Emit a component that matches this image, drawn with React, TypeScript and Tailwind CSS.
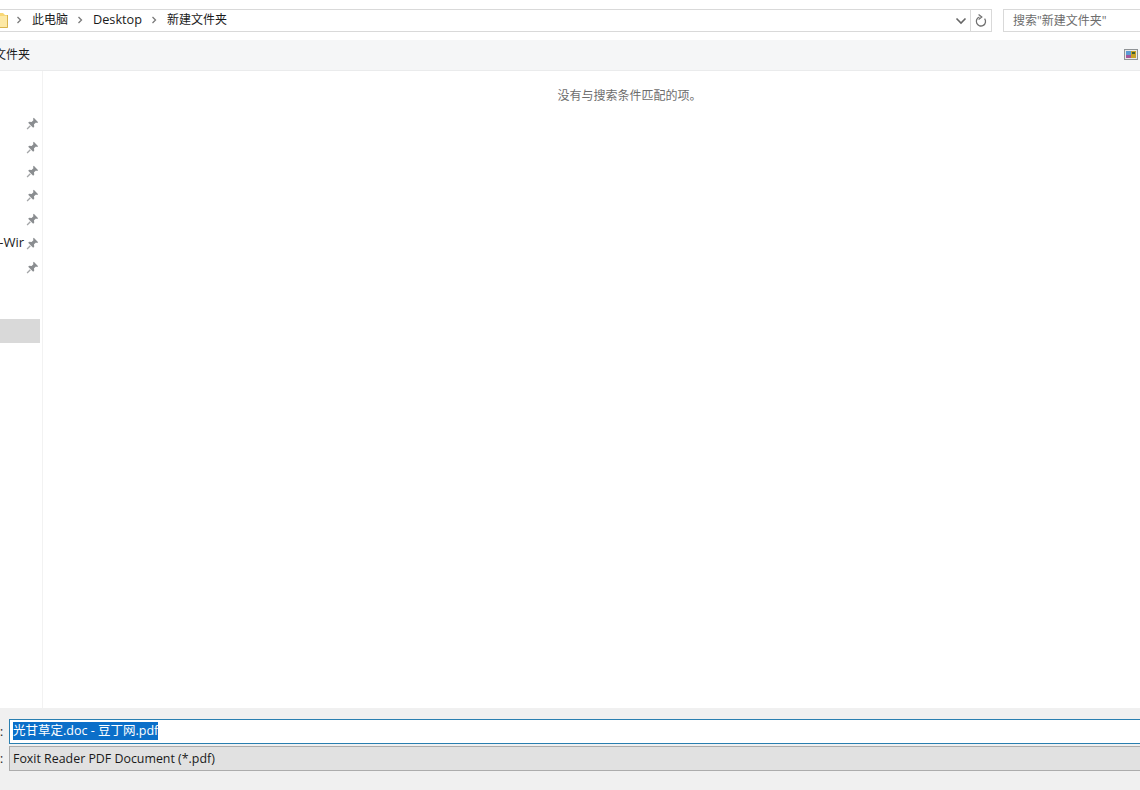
const sans = "font-['Open_Sans','Noto_Sans_CJK_SC',sans-serif]";

function Pin() {
  return (
    <svg width="13" height="13" viewBox="0 0 12 12" className="shrink-0">
      <path d="M7.2 0.8 L11.2 4.8 L10.2 5.6 L9.2 5 L7.4 6.8 L7.6 9 L6.6 10 L2 5.4 L3 4.4 L5.2 4.6 L7 2.8 L6.4 1.8 Z" fill="#8a8d90" />
      <path d="M4 8 L1 11" stroke="#a5a7a9" strokeWidth="1.2" />
    </svg>
  );
}

function SideRow({ label }: { label?: string }) {
  return (
    <div className="flex h-6 items-center justify-end overflow-hidden pr-[1px]">
      {label && <span className="mr-[2px] whitespace-nowrap text-[13px] text-[#1a1a1a]">{label}</span>}
      <Pin />
    </div>
  );
}

function Chevron() {
  return (
    <svg width="6" height="8" viewBox="0 0 6 8" className="shrink-0">
      <path d="M1.5 1 L4.5 4 L1.5 7" fill="none" stroke="#7a7a7a" strokeWidth="1.3" />
    </svg>
  );
}

export default function App() {
  return (
    <div className={`flex h-[790px] w-[1140px] flex-col overflow-hidden bg-white ${sans}`}>
      <div className="flex h-10 shrink-0 items-start bg-white pt-[9px]">
        <div className="flex h-[23px] w-[992px] items-center border-y border-r border-[#d9d9d9]">
          <svg width="8" height="15" viewBox="0 0 8 15" className="shrink-0">
            <path d="M0 0 H3 L5 2 H8 V15 H0 Z" fill="#f8d775" />
            <path d="M0 3 H8 V15 H0 Z" fill="#fde9a6" />
            <path d="M7.5 2 V14.5 H0" fill="none" stroke="#d9b44f" />
          </svg>
          <div className="ml-[8px] mt-[-1px]"><Chevron /></div>
          <span className="ml-[10px] mt-[-2px] text-xs text-[#1a1a1a]">此电脑</span>
          <div className="ml-[9px] mt-[-1px]"><Chevron /></div>
          <span className="ml-[10px] mt-[-2px] text-[12.7px] text-[#1a1a1a]">Desktop</span>
          <div className="ml-[9px] mt-[-1px]"><Chevron /></div>
          <span className="ml-[10px] mt-[-2px] text-xs text-[#1a1a1a]">新建文件夹</span>
          <svg width="12" height="8" viewBox="0 0 12 8" className="ml-auto mr-[3px] shrink-0">
            <path d="M1.5 1.5 L6 6 L10.5 1.5" fill="none" stroke="#666" strokeWidth="1.6" />
          </svg>
          <div className="flex h-full w-[21px] items-center justify-center border-l border-[#d9d9d9]">
            <svg width="12" height="14" viewBox="0 0 12 14" className="mr-[1px]">
              <path d="M9.6 4.6 A4.6 4.6 0 1 1 4.5 3" fill="none" stroke="#707070" strokeWidth="1.3" />
              <path d="M3.6 0.5 L6.8 3 L3.6 5.4" fill="none" stroke="#707070" strokeWidth="1.2" />
            </svg>
          </div>
        </div>
        <div className="ml-[11px] flex h-[23px] flex-1 items-center border-y border-l border-[#d9d9d9] pl-[9px] text-xs text-[#6d6d6d]">
          搜索"新建文件夹"
        </div>
      </div>

      <div className="flex h-[31px] shrink-0 items-center justify-between border-b border-[#eaebec] bg-[#f5f6f7]">
        <span className="ml-[-6px] text-xs text-[#1a1a1a]">文件夹</span>
        <svg width="14" height="11" viewBox="0 0 14 11" className="mr-[2px] mt-[-2px]">
          <rect x="0.5" y="0.5" width="13" height="10" fill="#e8e8e8" stroke="#8f9396" />
          <rect x="2" y="2" width="5" height="4" fill="#5b9bd5" />
          <rect x="2" y="6" width="5" height="3" fill="#a3569b" />
          <rect x="7" y="2" width="5" height="7" fill="#c9a227" />
          <rect x="8" y="3" width="3" height="2" fill="#3f5f2f" />
        </svg>
      </div>

      <div className="flex min-h-0 flex-1">
        <div className="flex w-[43px] shrink-0 flex-col border-r border-[#f2f2f2] pr-[2px] pt-[40px]">
          <SideRow />
          <SideRow />
          <SideRow />
          <SideRow />
          <SideRow />
          <SideRow label="-Wir" />
          <SideRow />
          <div className="mt-10 h-6 bg-[#d9d9d9]" />
        </div>
        <div className="flex-1 pl-[74px] pt-[17px] text-center text-xs text-[#6d6d6d]">
          <span className="ml-[2px]">没有与搜索条件匹配的项。</span>
        </div>
      </div>

      <div className="flex h-[82px] shrink-0 flex-col bg-[#f0f0f0] pt-[11px]">
        <div className="flex h-[25px] items-center">
          <span className="w-[10px] shrink-0 text-xs leading-none text-[#1a1a1a]">:</span>
          <div className="ml-[-1px] flex h-full flex-1 items-start border-y border-l border-[#2a7fb0] bg-white pl-[3px] pt-[2px]">
            <span className="bg-[#0b6fc9] text-[12.5px] leading-[18px] text-white">光甘草定.doc - 豆丁网.pdf</span>
          </div>
        </div>
        <div className="mt-[2px] flex h-[25px] items-center">
          <span className="w-[9px] shrink-0 text-xs leading-none text-[#1a1a1a]">:</span>
          <div className="flex h-full flex-1 items-center border-y border-l border-[#acacac] bg-[#e1e1e1] pl-[3px] pt-[2px] text-[12.4px] text-[#1a1a1a]">
            Foxit Reader PDF Document (*.pdf)
          </div>
        </div>
      </div>
    </div>
  );
}
